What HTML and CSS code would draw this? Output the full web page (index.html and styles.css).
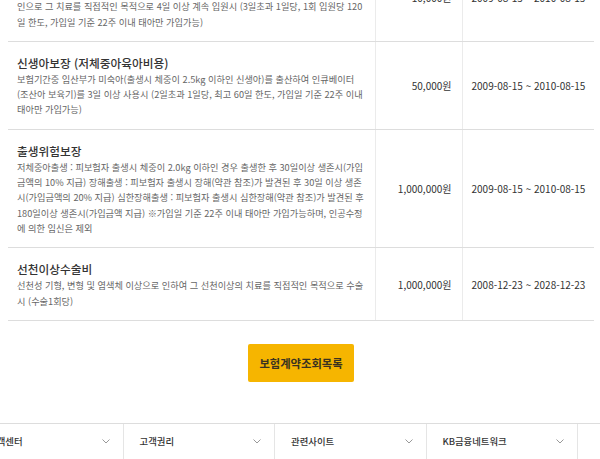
FILE: index.html
```html
<!DOCTYPE html>
<html lang="ko">
    <head>
        <meta charset="utf-8">
        <link rel="stylesheet" href="styles.css">
    </head>
    <body>
        <div class="plan">
            <table class="plan-table">
                <colgroup>
                    <col class="col-desc">
                    <col class="col-amt">
                    <col class="col-term">
                </colgroup>
                <tr>
                    <td class="desc">
                        <p class="tit">신생아입원비</p>
                        <p class="txt">보험기간중 피보험자가 출생한 후 질병 또는 재해를 직접적인 원<br>인으로 그 치료를 직접적인 목적으로 4일 이상 계속 입원시 (3일초과 1일당, 1회 입원당 120일 한도, 가입일 기준 22주 이내 태아만 가입가능)</p>
                    </td>
                    <td class="amt">10,000원</td>
                    <td class="term">2009-08-15 ~ 2010-08-15</td>
                </tr>
                <tr>
                    <td class="desc">
                        <p class="tit">신생아보장 (저체중아육아비용)</p>
                        <p class="txt">보험기간중 임산부가 미숙아(출생시 체중이 2.5kg 이하인 신생아)를 출산하여 인큐베이터<br>(조산아 보육기)를 3일 이상 사용시 (2일초과 1일당, 최고 60일 한도, 가입일 기준 22주 이내 태아만 가입가능)</p>
                    </td>
                    <td class="amt">50,000원</td>
                    <td class="term">2009-08-15 ~ 2010-08-15</td>
                </tr>
                <tr>
                    <td class="desc">
                        <p class="tit">출생위험보장</p>
                        <p class="txt">저체중아출생 : 피보험자 출생시 체중이 2.0kg 이하인 경우 출생한 후 30일이상 생존시(가입금액의 10% 지급) 장해출생 : 피보험자 출생시 장해(약관 참조)가 발견된 후 30일 이상 생존시(가입금액의 20% 지급) 심한장해출생 : 피보험자 출생시 심한장해(약관 참조)가 발견된 후 180일이상 생존시(가입금액 지급) ※가입일 기준 22주 이내 태아만 가입가능하며, 인공수정에 의한 임신은 제외</p>
                    </td>
                    <td class="amt">1,000,000원</td>
                    <td class="term">2009-08-15 ~ 2010-08-15</td>
                </tr>
                <tr>
                    <td class="desc">
                        <p class="tit">선천이상수술비</p>
                        <p class="txt">선천성 기형, 변형 및 염색체 이상으로 인하여 그 선천이상의 치료를 직접적인 목적으로 수술시 (수술1회당)</p>
                    </td>
                    <td class="amt">1,000,000원</td>
                    <td class="term">2008-12-23 ~ 2028-12-23</td>
                </tr>
            </table>

            <div class="btn-area">
                <a class="btn-list" href="#">보험계약조회목록</a>
            </div>
        </div>

        <div class="foot-menu">
            <ul>
                <li><span>고객센터</span><svg width="8" height="5" viewBox="0 0 8 5"><polyline points="0.5,0.5 4,4 7.5,0.5"/></svg></li>
                <li><span>고객권리</span><svg width="8" height="5" viewBox="0 0 8 5"><polyline points="0.5,0.5 4,4 7.5,0.5"/></svg></li>
                <li><span>관련사이트</span><svg width="8" height="5" viewBox="0 0 8 5"><polyline points="0.5,0.5 4,4 7.5,0.5"/></svg></li>
                <li><span>KB금융네트워크</span><svg width="8" height="5" viewBox="0 0 8 5"><polyline points="0.5,0.5 4,4 7.5,0.5"/></svg></li>
                <li></li>
            </ul>
        </div>
    </body>
</html>
```

FILE: styles.css
```css
*{margin:0;padding:0;box-sizing:border-box;}
ul{list-style:none;}
html,body{height:100%;}
body{font-family:"Noto Sans CJK KR","Noto Sans",sans-serif;color:#333;background:#fff;overflow:hidden;}

/* 보장내역 표 (화면이 스크롤된 상태) */
.plan{margin:-46px 6px 0 8px;}
.plan-table{width:100%;border-collapse:collapse;table-layout:fixed;}
.plan-table td{border-bottom:1px solid #ddd;vertical-align:middle;}
.plan-table td + td{border-left:1px solid #ebebeb;}
.col-desc{width:367px;}
.col-amt{width:87px;}
.col-term{width:132px;}

.desc{padding:12px 7.5px 11px 9px;}
.tit{font-size:11.7px;line-height:18px;color:#333;font-weight:500;}
.txt{font-size:9.2px;line-height:15.3px;color:#666;}
.amt{text-align:right;padding-right:10px;font-size:10px;color:#333;white-space:nowrap;}
.term{padding-left:9px;font-size:10px;color:#333;white-space:nowrap;}

.btn-area{display:flex;justify-content:center;padding-top:23.5px;}
.btn-list{display:block;width:106px;height:38px;line-height:38px;text-align:center;
    background:#f6b500;color:#3a3320;font-size:11.3px;font-weight:700;text-decoration:none;border-radius:2px;
}

/* 하단 메뉴 */
.foot-menu{margin-top:40.5px;border-top:1px solid #ddd;border-bottom:1px solid #ddd;overflow:hidden;}
.foot-menu ul{display:flex;margin-left:-28px;}
.foot-menu li{flex:0 0 151.5px;height:35px;display:flex;align-items:center;justify-content:space-between;
    padding:0 13px 0 16px;border-right:1px solid #e5e5e5;font-size:9.4px;font-weight:500;color:#333;
}
.foot-menu svg{fill:none;stroke:#999;stroke-width:1;}
```
